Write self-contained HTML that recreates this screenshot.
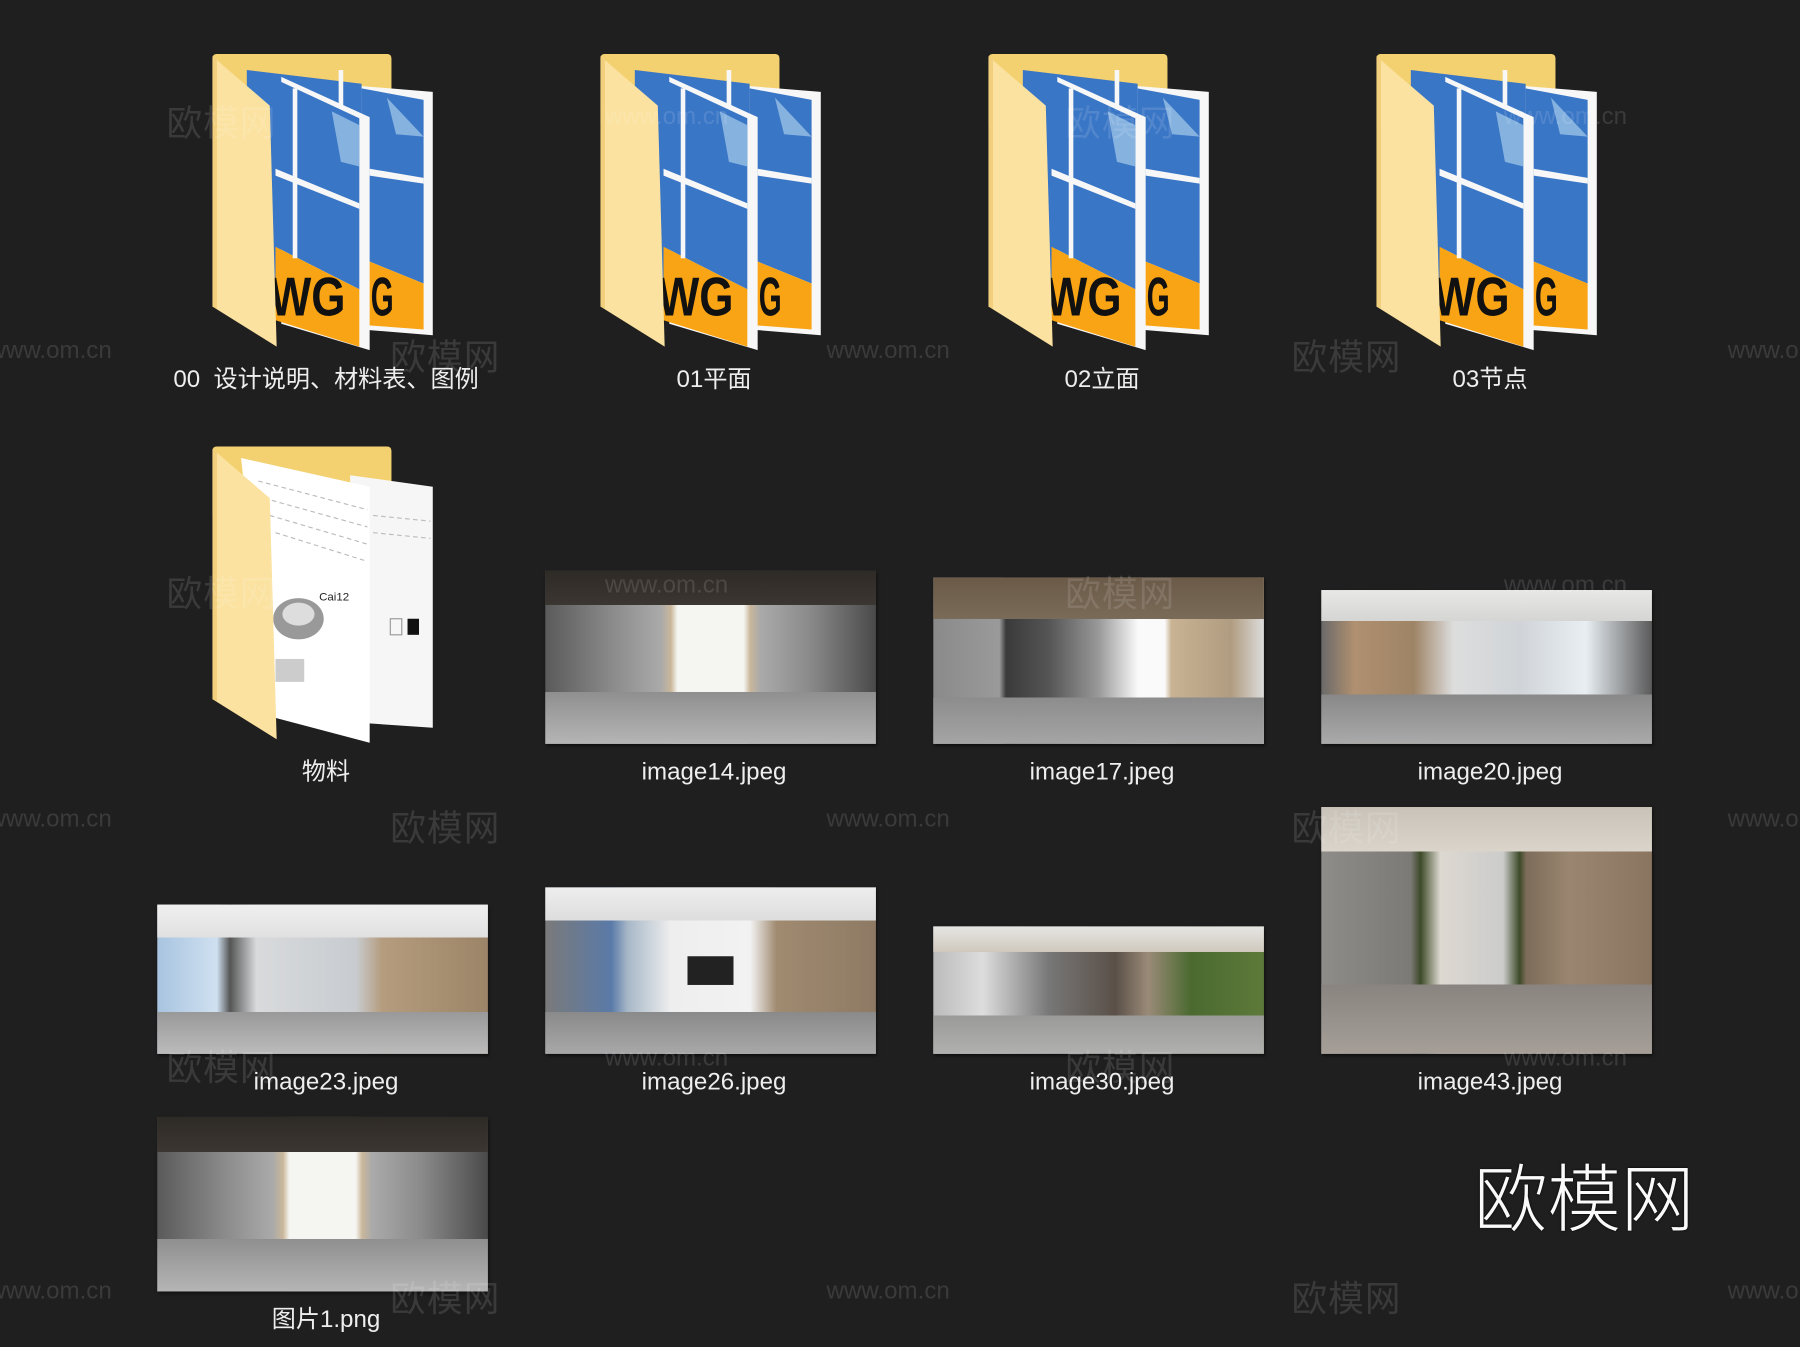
<!DOCTYPE html>
<html><head><meta charset="utf-8"><style>
html,body{margin:0;padding:0;background:#1f1f1f;overflow:hidden}
#w{position:absolute;left:0;top:0;width:1568px;height:1173px;transform:scale(1.147959);transform-origin:0 0;background:#1f1f1f;font-family:"Liberation Sans","Noto Sans CJK SC",sans-serif}
.a{position:absolute}
.lbl{position:absolute;width:338px;text-align:center;color:#eeeeee;font-size:21px;line-height:24px}
.wm{position:absolute;color:rgba(255,255,255,0.12);font-size:31px;letter-spacing:1px;font-family:"Noto Sans CJK SC",sans-serif;z-index:5}
.ww{position:absolute;color:rgba(255,255,255,0.12);font-size:21px;font-family:"Liberation Sans",sans-serif;z-index:5}
.img{position:absolute;box-shadow:1px 2px 3px rgba(0,0,0,.6);overflow:hidden}
</style></head><body><div id="w">

<!-- DWG folders -->
<svg width="0" height="0" style="position:absolute"><defs>
<g id="dwg">
<path d="M0,4 Q0,0 4,0 H152 Q156,0 156,4 V60 H0Z" fill="#f4d170"/>
<polygon points="130,28 192,33 192,245 130,240" fill="#f7f7f7"/>
<polygon points="130,30 184,40 184,200 130,178" fill="#3a76c6"/>
<polygon points="130,178 184,200 184,240 130,236" fill="#f9a414"/>
<polygon points="152,38 184,72 160,70" fill="#86b2e0"/>
<polygon points="137,100 184,108 184,113 137,106" fill="#f7f7f7"/>
<text x="138" y="228" textLength="20" lengthAdjust="spacingAndGlyphs" font-family="Liberation Sans,sans-serif" font-weight="bold" font-size="48" fill="#111">G</text>
<polygon points="30,14 130,26 130,236 30,220" fill="#3a76c6"/>
<polygon points="60,20 137,55 137,258 60,235" fill="#f7f7f7"/>
<polygon points="55,22 128,56 128,205 55,168" fill="#3a76c6"/>
<polygon points="55,168 128,205 128,255 55,232" fill="#f9a414"/>
<polygon points="104,50 128,62 128,98 112,94" fill="#86b2e0"/>
<rect x="70" y="30" width="4" height="148" fill="#f7f7f7"/>
<polygon points="55,100 128,130 128,135 55,106" fill="#f7f7f7"/>
<rect x="110" y="14" width="4" height="32" fill="#f7f7f7"/>
<text x="50" y="228" textLength="66" lengthAdjust="spacingAndGlyphs" font-family="Liberation Sans,sans-serif" font-weight="bold" font-size="48" fill="#111">WG</text>
<polygon points="0,2 50,45 56,255 0,220" fill="#fbe2a0"/>
<polygon points="0,2 4,4 4,222 0,220" fill="#f2cf7c"/>
</g>
</defs></svg>
<svg class="a" style="left:185px;top:47px" width="195" height="262" viewBox="0 0 195 262"><use href="#dwg"/></svg>
<svg class="a" style="left:523px;top:47px" width="195" height="262" viewBox="0 0 195 262"><use href="#dwg"/></svg>
<svg class="a" style="left:861px;top:47px" width="195" height="262" viewBox="0 0 195 262"><use href="#dwg"/></svg>
<svg class="a" style="left:1199px;top:47px" width="195" height="262" viewBox="0 0 195 262"><use href="#dwg"/></svg>
<div class="lbl" style="left:115px;top:319px">00&nbsp; 设计说明、材料表、图例</div>
<div class="lbl" style="left:453px;top:319px">01平面</div>
<div class="lbl" style="left:791px;top:319px">02立面</div>
<div class="lbl" style="left:1129px;top:319px">03节点</div>

<!-- 物料 folder -->
<svg class="a" style="left:185px;top:389px" width="195" height="262" viewBox="0 0 195 262">
<path d="M0,4 Q0,0 4,0 H152 Q156,0 156,4 V60 H0Z" fill="#f4d170"/>
<polygon points="120,25 192,35 192,245 120,240" fill="#f6f6f6"/>
<polygon points="25,10 137,35 137,258 50,235" fill="#ffffff"/>
<g stroke="#bbb" stroke-width="1" stroke-dasharray="4 3">
<line x1="40" y1="30" x2="135" y2="55"/><line x1="45" y1="45" x2="135" y2="70"/><line x1="50" y1="60" x2="135" y2="85"/><line x1="55" y1="75" x2="135" y2="100"/><line x1="140" y1="60" x2="190" y2="65"/><line x1="140" y1="75" x2="190" y2="80"/></g>
<ellipse cx="75" cy="150" rx="22" ry="18" fill="#999"/><ellipse cx="75" cy="146" rx="14" ry="10" fill="#ddd"/>
<text x="93" y="134" font-size="10" font-family="Liberation Sans,sans-serif" fill="#222">Cai12</text>
<rect x="170" y="150" width="10" height="14" fill="#111"/><rect x="155" y="150" width="10" height="14" fill="none" stroke="#999"/>
<rect x="55" y="185" width="25" height="20" fill="#ccc"/>
<polygon points="0,2 50,45 56,255 0,220" fill="#fbe2a0"/>
<polygon points="0,2 4,4 4,222 0,220" fill="#f2cf7c"/>
</svg>
<div class="lbl" style="left:115px;top:661px">物料</div>

<!-- images -->
<div class="img" style="left:475px;top:497px;width:288px;height:151px;background:linear-gradient(180deg,#2e2a26 0,#3b3631 20%,transparent 20%),linear-gradient(180deg,transparent 70%,#8f8f8f 70%,#b5b5b5 100%),linear-gradient(90deg,#5a5a5a 0,#8a8a8a 20%,#aaa 35%,#c9b79a 38%,#f5f5f2 40%,#f5f5f2 60%,#c9b79a 62%,#aaa 65%,#8a8a8a 80%,#4a4a4a 100%)"></div>
<div class="img" style="left:813px;top:503px;width:288px;height:145px;background:linear-gradient(180deg,transparent 72%,#8c8c8c 72%,#a5a5a5 100%),linear-gradient(180deg,#6b5a48 0,#7a6a58 25%,transparent 25%),linear-gradient(90deg,#8a8a8a 0,#9a9a9a 20%,#3a3a3a 22%,#555 35%,#999 50%,#fafafa 62%,#fafafa 70%,#c8b393 72%,#b09c80 90%,#dcdcdc 100%)"></div>
<div class="img" style="left:1151px;top:514px;width:288px;height:134px;background:linear-gradient(180deg,#e8e8e6 0,#d5d5d3 20%,transparent 20%),linear-gradient(180deg,transparent 68%,#888 68%,#aaa 100%),linear-gradient(90deg,#6a6a6a 0,#b09070 10%,#9e8466 28%,#ddd 40%,#d0d4d8 60%,#e8eef2 80%,#5a5a5a 100%)"></div>
<div class="lbl" style="left:453px;top:661px">image14.jpeg</div>
<div class="lbl" style="left:791px;top:661px">image17.jpeg</div>
<div class="lbl" style="left:1129px;top:661px">image20.jpeg</div>

<div class="img" style="left:137px;top:788px;width:288px;height:130px;background:linear-gradient(180deg,#f0f0f0 0,#e0e0e0 22%,transparent 22%),linear-gradient(180deg,transparent 72%,#999 72%,#bbb 100%),linear-gradient(90deg,#a8c4e0 0,#cfe0f0 18%,#555 22%,#d8dadc 30%,#c8ccd0 60%,#b59c7e 68%,#9c8468 100%)"></div>
<div class="img" style="left:475px;top:773px;width:288px;height:145px;background:linear-gradient(180deg,#eee 0,#ddd 20%,transparent 20%),linear-gradient(90deg,transparent 43%,#222 43%,#222 57%,transparent 57%) 0 60px/100% 25px no-repeat,linear-gradient(180deg,transparent 75%,#8a8a8a 75%,#a8a8a8 100%),linear-gradient(90deg,#7a7a7a 0,#5a7aa8 20%,#a8b8c8 25%,#eee 38%,#f2f2f2 62%,#a08a70 70%,#8e7a64 100%)"></div>
<div class="img" style="left:813px;top:807px;width:288px;height:111px;background:linear-gradient(180deg,#e6e6e4 0,#d0c8bc 20%,transparent 20%),linear-gradient(180deg,transparent 70%,#9a9a98 70%,#b0b0ae 100%),linear-gradient(90deg,#bbb 0,#ddd 15%,#777 35%,#5a5048 55%,#9a8a78 65%,#4b6a30 78%,#5d7a3a 100%)"></div>
<div class="img" style="left:1151px;top:703px;width:288px;height:215px;background:linear-gradient(180deg,transparent 72%,#8a8480 72%,#a59f98 100%),linear-gradient(180deg,#c8c2b8 0,#dad4ca 18%,transparent 18%),linear-gradient(90deg,#8e8c88 0,#7c7a76 27%,#3c4a28 30%,#ddd8d0 36%,#ccc 55%,#3c4a28 60%,#7d6c5a 62%,#9a8670 75%,#8a7660 100%)"></div>
<div class="lbl" style="left:115px;top:931px">image23.jpeg</div>
<div class="lbl" style="left:453px;top:931px">image26.jpeg</div>
<div class="lbl" style="left:791px;top:931px">image30.jpeg</div>
<div class="lbl" style="left:1129px;top:931px">image43.jpeg</div>

<div class="img" style="left:137px;top:973px;width:288px;height:152px;background:linear-gradient(180deg,#2e2a26 0,#3b3631 20%,transparent 20%),linear-gradient(180deg,transparent 70%,#8f8f8f 70%,#b5b5b5 100%),linear-gradient(90deg,#5a5a5a 0,#8a8a8a 20%,#aaa 35%,#c9b79a 38%,#f5f5f2 40%,#f5f5f2 60%,#c9b79a 62%,#aaa 65%,#8a8a8a 80%,#4a4a4a 100%)"></div>
<div class="lbl" style="left:115px;top:1138px">图片1.png</div>

<div class="a" style="left:1284px;top:1000px;color:#fafafa;font-size:64px;line-height:80px;font-family:'Noto Sans CJK SC',sans-serif;font-weight:300;text-shadow:0 0 2px #000">欧模网</div>

<!-- watermarks -->
<div class="wm" style="left:145px;top:82px">欧模网</div>
<div class="wm" style="left:928px;top:82px">欧模网</div>
<div class="ww" style="left:527px;top:90px">www.om.cn</div>
<div class="ww" style="left:1310px;top:90px">www.om.cn</div>
<div class="wm" style="left:340px;top:286px">欧模网</div>
<div class="wm" style="left:1125px;top:286px">欧模网</div>
<div class="ww" style="left:-10px;top:294px">www.om.cn</div>
<div class="ww" style="left:720px;top:294px">www.om.cn</div>
<div class="ww" style="left:1505px;top:294px">www.om.cn</div>
<div class="wm" style="left:145px;top:492px">欧模网</div>
<div class="wm" style="left:928px;top:492px">欧模网</div>
<div class="ww" style="left:527px;top:498px">www.om.cn</div>
<div class="ww" style="left:1310px;top:498px">www.om.cn</div>
<div class="wm" style="left:340px;top:696px">欧模网</div>
<div class="wm" style="left:1125px;top:696px">欧模网</div>
<div class="ww" style="left:-10px;top:702px">www.om.cn</div>
<div class="ww" style="left:720px;top:702px">www.om.cn</div>
<div class="ww" style="left:1505px;top:702px">www.om.cn</div>
<div class="wm" style="left:145px;top:905px">欧模网</div>
<div class="wm" style="left:928px;top:905px">欧模网</div>
<div class="ww" style="left:527px;top:910px">www.om.cn</div>
<div class="ww" style="left:1310px;top:910px">www.om.cn</div>
<div class="wm" style="left:340px;top:1106px">欧模网</div>
<div class="wm" style="left:1125px;top:1106px">欧模网</div>
<div class="ww" style="left:-10px;top:1113px">www.om.cn</div>
<div class="ww" style="left:720px;top:1113px">www.om.cn</div>
<div class="ww" style="left:1505px;top:1113px">www.om.cn</div>
</div></body></html>
